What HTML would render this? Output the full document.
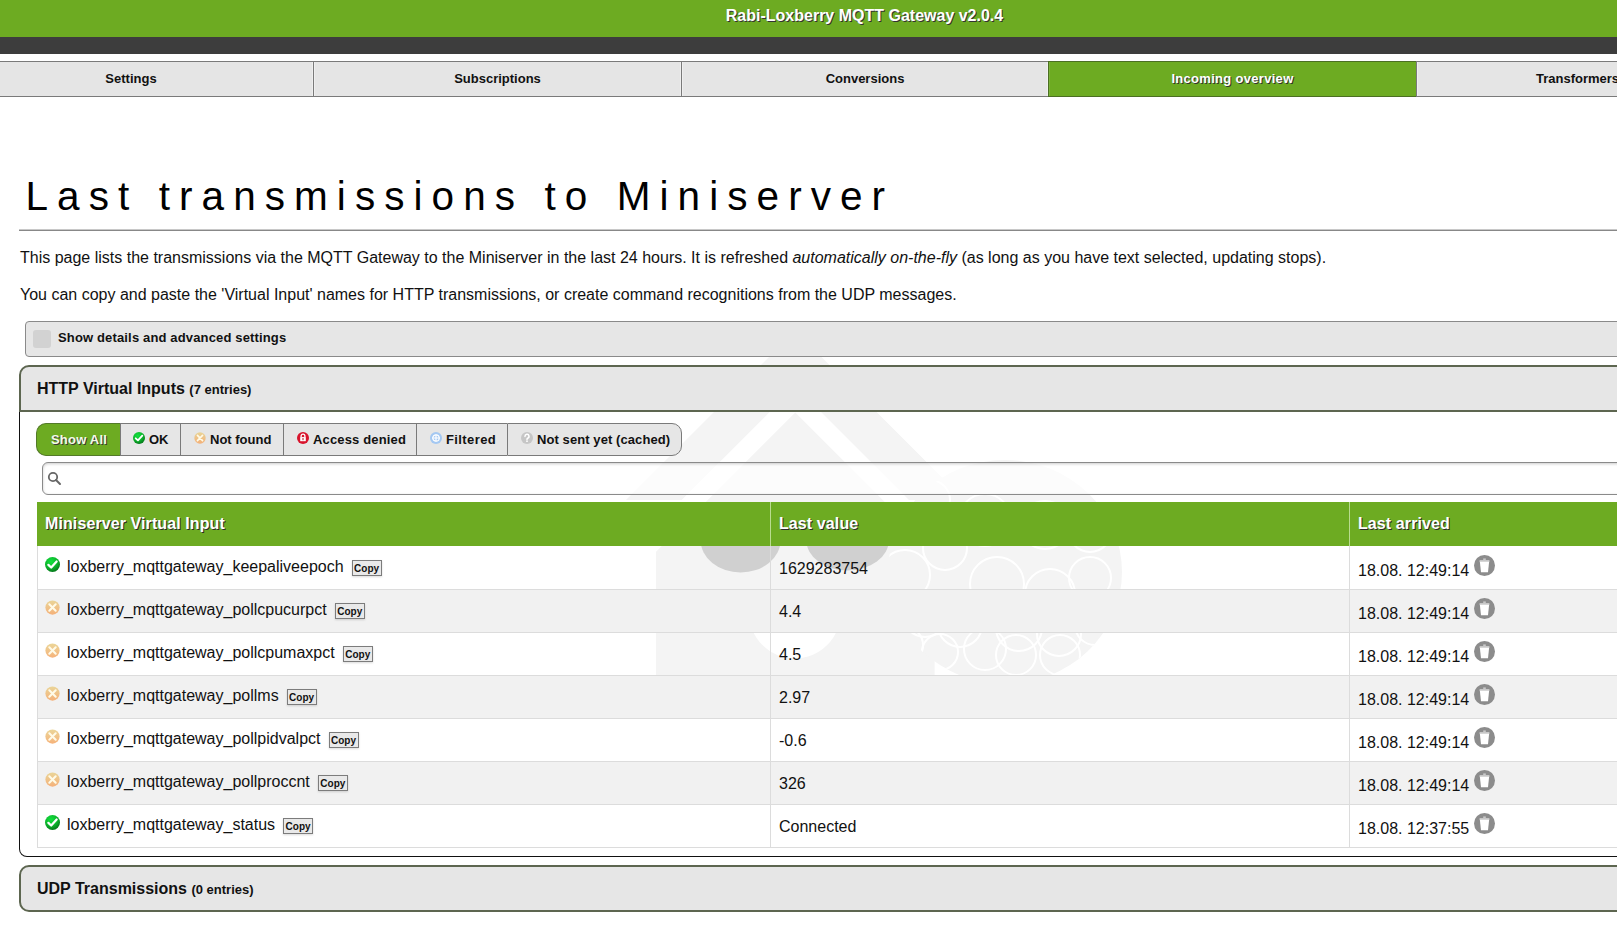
<!DOCTYPE html>
<html><head><meta charset="utf-8">
<style>
*{box-sizing:border-box;}
html,body{margin:0;padding:0;}
body{width:1617px;height:932px;overflow:hidden;position:relative;background:#fff;font-family:"Liberation Sans",sans-serif;color:#000;}
.abs{position:absolute;}
.tx{position:absolute;line-height:1;white-space:nowrap;}
#hdr{left:0;top:0;width:1617px;height:37px;background:#6dab22;}
#hdr .t{position:absolute;left:0;width:1729px;top:8px;text-align:center;font-size:16px;font-weight:bold;color:#fff;text-shadow:1px 1px 0 #333;line-height:1;}
#bar{left:0;top:37px;width:1617px;height:17px;background:#3d3d3d;}
#nav{left:0;top:61px;width:1617px;height:36px;border-top:1px solid #7a7a7a;border-bottom:1px solid #7a7a7a;background:#e5e5e5;}
#nav .it{position:absolute;top:0;height:34px;text-align:center;border-left:1px solid #7a7a7a;}
#nav .it span{position:absolute;left:0;right:0;top:10px;font-size:13px;font-weight:bold;color:#111;line-height:1;}
#nav .it{box-shadow:inset 1px 0 0 #efefef, inset -1px 0 0 #efefef;}
#nav .act{background:#6dab22;top:-1px;height:36px;border-top:1px solid #4b6f22;border-bottom:1px solid #4b6f22;border-left-color:#4b6f22;box-shadow:inset 1px 0 0 #7cb23a;}
#nav .act span{top:10px;}
#nav .act span{color:#fff;text-shadow:1px 1px 0 #333;}
h1{position:absolute;left:25.5px;top:175.7px;margin:0;font-size:40.5px;font-weight:normal;letter-spacing:9.07px;line-height:1;white-space:nowrap;color:#000;}
#hr{left:19px;top:229px;width:1600px;height:2px;border-top:1px solid #c8c8c8;background:#888;}
.p{position:absolute;left:20px;font-size:16px;line-height:20px;white-space:nowrap;color:#111;}
/* watermark */
#wm{left:640px;top:340px;}
/* show details */
#sd{left:25px;top:321px;width:1620px;height:36px;border:1px solid #8a8a8a;border-radius:4px;background:#e6e6e6;}
#sdcb{left:33px;top:330px;width:18px;height:18px;border-radius:3px;background:#d2d2d2;}
/* collapsibles */
.ch{left:19px;width:1630px;border:2px solid #5d6650;border-radius:10px 0 0 0;background:#e6e6e6;}
#vic{left:19px;top:410px;width:1630px;height:447px;border:1px solid #111;border-top:none;border-radius:0 0 0 8px;background:transparent;}
#udp-h{top:865px;height:47px;border-radius:10px 0 0 10px;}
/* filter group */
#fg{left:36px;top:423px;height:33px;}
.fb{position:absolute;top:0;height:33px;background:#e6e6e6;border-top:1px solid #7a7a7a;border-bottom:1px solid #7a7a7a;border-left:1px solid #7a7a7a;}
.fb span{position:absolute;top:9px;font-size:13px;font-weight:bold;color:#111;line-height:1;white-space:nowrap;}
/* search */
#srch{left:42px;top:462px;width:1600px;height:33px;border:1px solid #8a8a8a;border-radius:6px;background:rgba(255,255,255,0.7);box-shadow:inset 0 1px 3px rgba(0,0,0,0.2);}
/* table */
#th{left:37px;top:502px;width:1600px;height:44px;background:#6dab22;}
.thc{position:absolute;font-size:16px;font-weight:bold;color:#fff;text-shadow:1px 1px 0 #2a2a2a;letter-spacing:0.1px;line-height:1;white-space:nowrap;}
.row{left:37px;width:1600px;height:44px;border-bottom:1px solid #dcdcdc;}
.td{font-size:16px;line-height:1;white-space:nowrap;color:#111;}
.copy{width:30px;height:16px;border:1px solid #7c7c7c;background:#e9e9e9;font-size:10px;font-weight:bold;line-height:15px;text-align:center;color:#111;box-shadow:0 1px 2px rgba(0,0,0,0.15);}
.vl{top:502px;width:1px;height:345px;}
</style></head><body>
<svg class="abs" style="left:0;top:0" width="1617" height="932" viewBox="0 0 1617 932">
<defs><clipPath id="rb"><ellipse cx="1005" cy="572" rx="117" ry="112"/></clipPath><clipPath id="eyes"><rect x="0" y="546" width="1617" height="400"/></clipPath></defs>
<g fill="#f4f4f4">
<polygon points="626,500 795.3,330.7 964.6,500 909,500 795.3,386.3 681.7,500"/>
<polygon points="795.3,412.5 934.6,551.8 934.6,700 656,700 656,551.8"/>
<ellipse cx="1005" cy="572" rx="117" ry="112"/>
</g>
<g fill="none" stroke="#fff" stroke-width="2" clip-path="url(#rb)"><circle cx="905" cy="575" r="25"/><circle cx="945" cy="548" r="22"/><circle cx="997" cy="584" r="27"/><circle cx="1050" cy="594" r="25"/><circle cx="1090" cy="578" r="21"/><circle cx="925" cy="615" r="22"/><circle cx="960" cy="625" r="22"/><circle cx="1019" cy="628" r="23"/><circle cx="1059" cy="634" r="22"/><circle cx="1095" cy="625" r="20"/><circle cx="940" cy="652" r="18"/><circle cx="985" cy="649" r="21"/><circle cx="1016" cy="655" r="20"/><circle cx="1060" cy="655" r="20"/><circle cx="905" cy="645" r="18"/><circle cx="985" cy="520" r="26"/><circle cx="1045" cy="525" r="24"/><circle cx="930" cy="500" r="20"/><circle cx="1090" cy="530" r="22"/></g>
<path d="M749,612.7 A45.8,45.8 0 0 0 840.6,612.7 Z" fill="#fff"/>
<g clip-path="url(#eyes)">
<ellipse cx="740.6" cy="540" rx="40" ry="32.6" fill="#d0d0d0"/>
<ellipse cx="847.6" cy="540" rx="41.3" ry="30.5" fill="#d0d0d0"/>
</g>
</svg>
<div id="hdr" class="abs"><div class="t">Rabi-Loxberry MQTT Gateway v2.0.4</div></div>
<div id="bar" class="abs"></div>
<div id="nav" class="abs">
 <div class="it" style="left:-51px;width:364px;border-left:none"><span>Settings</span></div>
 <div class="it" style="left:313px;width:368px"><span>Subscriptions</span></div>
 <div class="it" style="left:681px;width:367px"><span>Conversions</span></div>
 <div class="it act" style="left:1048px;width:368px"><span style="letter-spacing:0.3px">Incoming overview</span></div>
 <div class="it" style="left:1416px;width:368px"><span style="left:119px;right:auto">Transformers</span></div>
</div>
<h1>Last transmissions to Miniserver</h1>
<div id="hr" class="abs"></div>
<div class="p" style="top:248px">This page lists the transmissions via the MQTT Gateway to the Miniserver in the last 24 hours. It is refreshed <i>automatically on-the-fly</i> (as long as you have text selected, updating stops).</div>
<div class="p" style="top:285px">You can copy and paste the 'Virtual Input' names for HTTP transmissions, or create command recognitions from the UDP messages.</div>

<div id="sd" class="abs"></div>
<div id="sdcb" class="abs"></div>
<div class="tx" style="left:58px;top:331px;font-size:13px;font-weight:bold;color:#111;letter-spacing:0.15px">Show details and advanced settings</div>

<div id="vic" class="abs"></div>
<div id="vih" class="abs ch" style="top:365px;height:47px"></div>
<div class="tx" style="left:37px;top:381px;font-size:16px;font-weight:bold;color:#111">HTTP Virtual Inputs <span style="font-size:13px">(7 entries)</span></div>

<div id="fg" class="abs">
 <div class="fb" style="left:0;width:84px;background:#6dab22;border-color:#537a28;border-radius:10px 0 0 10px"><span style="left:14px;color:#f4fbe8;text-shadow:1px 1px 0 #3a3a3a;letter-spacing:0.2px">Show All</span></div>
 <div class="fb" style="left:84px;width:60px"><span style="left:28px">OK</span></div>
 <div class="fb" style="left:144px;width:103px"><span style="left:29px">Not found</span></div>
 <div class="fb" style="left:247px;width:133px"><span style="left:29px;letter-spacing:0.15px">Access denied</span></div>
 <div class="fb" style="left:380px;width:91px"><span style="left:29px;letter-spacing:0.4px">Filtered</span></div>
 <div class="fb" style="left:471px;width:175px;border-right:1px solid #7a7a7a;border-radius:0 10px 10px 0"><span style="left:29px;letter-spacing:0.08px">Not sent yet (cached)</span></div>
</div>


<svg class="abs" style="left:133px;top:432px" width="12" height="12" viewBox="0 0 16 16"><defs><radialGradient id="gokf" cx="40%" cy="30%" r="70%"><stop offset="0" stop-color="#12e23e"/><stop offset="0.6" stop-color="#0cb52c"/><stop offset="1" stop-color="#067a1c"/></radialGradient></defs><circle cx="8" cy="8" r="8" fill="url(#gokf)"/><path d="M3.6 8.4 L6.6 11.2 L12.4 4.8" fill="none" stroke="#fff" stroke-width="2.4" stroke-linecap="round" stroke-linejoin="round"/></svg>
<svg class="abs" style="left:194px;top:432px" width="12" height="12" viewBox="0 0 16 16"><defs><linearGradient id="gnff" x1="0" y1="0" x2="0" y2="1"><stop offset="0" stop-color="#e9d28e"/><stop offset="1" stop-color="#f5aa6c"/></linearGradient></defs><circle cx="8" cy="8" r="7.6" fill="url(#gnff)" opacity="0.9"/><path d="M4.6 4.6 L11.4 11.4 M11.4 4.6 L4.6 11.4" fill="none" stroke="#fffbe8" stroke-width="2.2" stroke-linecap="round"/></svg>
<svg class="abs" style="left:297px;top:432px" width="12" height="12" viewBox="0 0 12 12"><circle cx="6" cy="6" r="6" fill="#d8142c"/><path d="M4.1 5.2 V4.1 A1.9 1.9 0 0 1 7.9 4.1 V5.2" fill="none" stroke="#fff" stroke-width="1.3"/><rect x="3.2" y="5.1" width="5.6" height="4.1" fill="#fff"/><rect x="5.5" y="6" width="1" height="2.2" fill="#b01020"/></svg>
<svg class="abs" style="left:430px;top:432px" width="12" height="12" viewBox="0 0 12 12"><circle cx="6" cy="6" r="6" fill="#a4c8f2"/><circle cx="6" cy="6" r="3.2" fill="none" stroke="#fff" stroke-width="1.2"/><path d="M2 6 H10 M6 2.6 V9.4" stroke="#fff" stroke-width="1.2"/></svg>
<svg class="abs" style="left:521px;top:432px" width="12" height="12" viewBox="0 0 12 12"><circle cx="6" cy="6" r="6" fill="#c6c6c6"/><path d="M4 4.4 A2 2 0 1 1 6.6 6.2 Q6 6.5 6 7.4" fill="none" stroke="#fff" stroke-width="1.5" stroke-linecap="round"/><circle cx="6" cy="9.2" r="0.9" fill="#fff"/></svg>
<div id="srch" class="abs"></div>
<svg class="abs" style="left:47px;top:471px" width="15" height="15" viewBox="0 0 15 15"><circle cx="6" cy="6" r="4.2" fill="none" stroke="#666" stroke-width="1.8"/><path d="M9 9 L13 13" stroke="#666" stroke-width="2" stroke-linecap="round"/></svg>

<div id="th" class="abs"></div>
<div class="thc" style="left:45px;top:516px">Miniserver Virtual Input</div>
<div class="thc" style="left:779px;top:516px">Last value</div>
<div class="thc" style="left:1358px;top:516px">Last arrived</div>
<div class="row abs" style="top:546px;height:44px;background:transparent"></div>
<svg class="abs" style="left:45px;top:557px" width="15" height="15" viewBox="0 0 16 16"><defs><radialGradient id="gok45557" cx="40%" cy="30%" r="70%"><stop offset="0" stop-color="#12e23e"/><stop offset="0.6" stop-color="#0cb52c"/><stop offset="1" stop-color="#067a1c"/></radialGradient></defs><circle cx="8" cy="8" r="8" fill="url(#gok45557)"/><path d="M3.6 8.4 L6.6 11.2 L12.4 4.8" fill="none" stroke="#fff" stroke-width="2.4" stroke-linecap="round" stroke-linejoin="round"/></svg>
<div class="td abs" style="left:67px;top:559px">loxberry_mqttgateway_keepaliveepoch</div>
<div class="copy abs" style="left:351.6px;top:560px">Copy</div>
<div class="td abs" style="left:779px;top:561px">1629283754</div>
<div class="td abs" style="left:1358px;top:563px">18.08. 12:49:14</div>
<svg class="abs" style="left:1474px;top:555px" width="21" height="21" viewBox="0 0 21 21"><circle cx="10.5" cy="10.5" r="10.5" fill="#8c8c8c"/><path d="M5.6 5.2 H15.4 V7 H5.6 Z" fill="#d6d6d6"/><path d="M9.2 3.4 H11.8 V5.2 H9.2Z" fill="#c8c8c8"/><path d="M5.9 7 H15.1 L14 17.2 H7 Z" fill="#fff"/></svg>
<div class="row abs" style="top:590px;height:43px;background:#f1f1f1"></div>
<svg class="abs" style="left:45px;top:600px" width="15" height="15" viewBox="0 0 16 16"><defs><linearGradient id="gnf45600" x1="0" y1="0" x2="0" y2="1"><stop offset="0" stop-color="#e9d28e"/><stop offset="1" stop-color="#f5aa6c"/></linearGradient></defs><circle cx="8" cy="8" r="7.6" fill="url(#gnf45600)" opacity="0.9"/><path d="M4.6 4.6 L11.4 11.4 M11.4 4.6 L4.6 11.4" fill="none" stroke="#fffbe8" stroke-width="2.2" stroke-linecap="round"/></svg>
<div class="td abs" style="left:67px;top:602px">loxberry_mqttgateway_pollcpucurpct</div>
<div class="copy abs" style="left:334.7px;top:603px">Copy</div>
<div class="td abs" style="left:779px;top:604px">4.4</div>
<div class="td abs" style="left:1358px;top:606px">18.08. 12:49:14</div>
<svg class="abs" style="left:1474px;top:598px" width="21" height="21" viewBox="0 0 21 21"><circle cx="10.5" cy="10.5" r="10.5" fill="#8c8c8c"/><path d="M5.6 5.2 H15.4 V7 H5.6 Z" fill="#d6d6d6"/><path d="M9.2 3.4 H11.8 V5.2 H9.2Z" fill="#c8c8c8"/><path d="M5.9 7 H15.1 L14 17.2 H7 Z" fill="#fff"/></svg>
<div class="row abs" style="top:633px;height:43px;background:transparent"></div>
<svg class="abs" style="left:45px;top:643px" width="15" height="15" viewBox="0 0 16 16"><defs><linearGradient id="gnf45643" x1="0" y1="0" x2="0" y2="1"><stop offset="0" stop-color="#e9d28e"/><stop offset="1" stop-color="#f5aa6c"/></linearGradient></defs><circle cx="8" cy="8" r="7.6" fill="url(#gnf45643)" opacity="0.9"/><path d="M4.6 4.6 L11.4 11.4 M11.4 4.6 L4.6 11.4" fill="none" stroke="#fffbe8" stroke-width="2.2" stroke-linecap="round"/></svg>
<div class="td abs" style="left:67px;top:645px">loxberry_mqttgateway_pollcpumaxpct</div>
<div class="copy abs" style="left:342.7px;top:646px">Copy</div>
<div class="td abs" style="left:779px;top:647px">4.5</div>
<div class="td abs" style="left:1358px;top:649px">18.08. 12:49:14</div>
<svg class="abs" style="left:1474px;top:641px" width="21" height="21" viewBox="0 0 21 21"><circle cx="10.5" cy="10.5" r="10.5" fill="#8c8c8c"/><path d="M5.6 5.2 H15.4 V7 H5.6 Z" fill="#d6d6d6"/><path d="M9.2 3.4 H11.8 V5.2 H9.2Z" fill="#c8c8c8"/><path d="M5.9 7 H15.1 L14 17.2 H7 Z" fill="#fff"/></svg>
<div class="row abs" style="top:676px;height:43px;background:#f1f1f1"></div>
<svg class="abs" style="left:45px;top:686px" width="15" height="15" viewBox="0 0 16 16"><defs><linearGradient id="gnf45686" x1="0" y1="0" x2="0" y2="1"><stop offset="0" stop-color="#e9d28e"/><stop offset="1" stop-color="#f5aa6c"/></linearGradient></defs><circle cx="8" cy="8" r="7.6" fill="url(#gnf45686)" opacity="0.9"/><path d="M4.6 4.6 L11.4 11.4 M11.4 4.6 L4.6 11.4" fill="none" stroke="#fffbe8" stroke-width="2.2" stroke-linecap="round"/></svg>
<div class="td abs" style="left:67px;top:688px">loxberry_mqttgateway_pollms</div>
<div class="copy abs" style="left:286.6px;top:689px">Copy</div>
<div class="td abs" style="left:779px;top:690px">2.97</div>
<div class="td abs" style="left:1358px;top:692px">18.08. 12:49:14</div>
<svg class="abs" style="left:1474px;top:684px" width="21" height="21" viewBox="0 0 21 21"><circle cx="10.5" cy="10.5" r="10.5" fill="#8c8c8c"/><path d="M5.6 5.2 H15.4 V7 H5.6 Z" fill="#d6d6d6"/><path d="M9.2 3.4 H11.8 V5.2 H9.2Z" fill="#c8c8c8"/><path d="M5.9 7 H15.1 L14 17.2 H7 Z" fill="#fff"/></svg>
<div class="row abs" style="top:719px;height:43px;background:transparent"></div>
<svg class="abs" style="left:45px;top:729px" width="15" height="15" viewBox="0 0 16 16"><defs><linearGradient id="gnf45729" x1="0" y1="0" x2="0" y2="1"><stop offset="0" stop-color="#e9d28e"/><stop offset="1" stop-color="#f5aa6c"/></linearGradient></defs><circle cx="8" cy="8" r="7.6" fill="url(#gnf45729)" opacity="0.9"/><path d="M4.6 4.6 L11.4 11.4 M11.4 4.6 L4.6 11.4" fill="none" stroke="#fffbe8" stroke-width="2.2" stroke-linecap="round"/></svg>
<div class="td abs" style="left:67px;top:731px">loxberry_mqttgateway_pollpidvalpct</div>
<div class="copy abs" style="left:328.5px;top:732px">Copy</div>
<div class="td abs" style="left:779px;top:733px">-0.6</div>
<div class="td abs" style="left:1358px;top:735px">18.08. 12:49:14</div>
<svg class="abs" style="left:1474px;top:727px" width="21" height="21" viewBox="0 0 21 21"><circle cx="10.5" cy="10.5" r="10.5" fill="#8c8c8c"/><path d="M5.6 5.2 H15.4 V7 H5.6 Z" fill="#d6d6d6"/><path d="M9.2 3.4 H11.8 V5.2 H9.2Z" fill="#c8c8c8"/><path d="M5.9 7 H15.1 L14 17.2 H7 Z" fill="#fff"/></svg>
<div class="row abs" style="top:762px;height:43px;background:#f1f1f1"></div>
<svg class="abs" style="left:45px;top:772px" width="15" height="15" viewBox="0 0 16 16"><defs><linearGradient id="gnf45772" x1="0" y1="0" x2="0" y2="1"><stop offset="0" stop-color="#e9d28e"/><stop offset="1" stop-color="#f5aa6c"/></linearGradient></defs><circle cx="8" cy="8" r="7.6" fill="url(#gnf45772)" opacity="0.9"/><path d="M4.6 4.6 L11.4 11.4 M11.4 4.6 L4.6 11.4" fill="none" stroke="#fffbe8" stroke-width="2.2" stroke-linecap="round"/></svg>
<div class="td abs" style="left:67px;top:774px">loxberry_mqttgateway_pollproccnt</div>
<div class="copy abs" style="left:317.8px;top:775px">Copy</div>
<div class="td abs" style="left:779px;top:776px">326</div>
<div class="td abs" style="left:1358px;top:778px">18.08. 12:49:14</div>
<svg class="abs" style="left:1474px;top:770px" width="21" height="21" viewBox="0 0 21 21"><circle cx="10.5" cy="10.5" r="10.5" fill="#8c8c8c"/><path d="M5.6 5.2 H15.4 V7 H5.6 Z" fill="#d6d6d6"/><path d="M9.2 3.4 H11.8 V5.2 H9.2Z" fill="#c8c8c8"/><path d="M5.9 7 H15.1 L14 17.2 H7 Z" fill="#fff"/></svg>
<div class="row abs" style="top:805px;height:43px;background:transparent"></div>
<svg class="abs" style="left:45px;top:815px" width="15" height="15" viewBox="0 0 16 16"><defs><radialGradient id="gok45815" cx="40%" cy="30%" r="70%"><stop offset="0" stop-color="#12e23e"/><stop offset="0.6" stop-color="#0cb52c"/><stop offset="1" stop-color="#067a1c"/></radialGradient></defs><circle cx="8" cy="8" r="8" fill="url(#gok45815)"/><path d="M3.6 8.4 L6.6 11.2 L12.4 4.8" fill="none" stroke="#fff" stroke-width="2.4" stroke-linecap="round" stroke-linejoin="round"/></svg>
<div class="td abs" style="left:67px;top:817px">loxberry_mqttgateway_status</div>
<div class="copy abs" style="left:283.1px;top:818px">Copy</div>
<div class="td abs" style="left:779px;top:819px">Connected</div>
<div class="td abs" style="left:1358px;top:821px">18.08. 12:37:55</div>
<svg class="abs" style="left:1474px;top:813px" width="21" height="21" viewBox="0 0 21 21"><circle cx="10.5" cy="10.5" r="10.5" fill="#8c8c8c"/><path d="M5.6 5.2 H15.4 V7 H5.6 Z" fill="#d6d6d6"/><path d="M9.2 3.4 H11.8 V5.2 H9.2Z" fill="#c8c8c8"/><path d="M5.9 7 H15.1 L14 17.2 H7 Z" fill="#fff"/></svg>
<div class="vl abs" style="left:770px;top:502px;height:44px;background:#b9dc8f"></div>
<div class="vl abs" style="left:1349px;top:502px;height:44px;background:#b9dc8f"></div>
<div class="vl abs" style="left:770px;top:546px;height:301px;background:#dcdcdc"></div>
<div class="vl abs" style="left:1349px;top:546px;height:301px;background:#dcdcdc"></div>
<div class="vl abs" style="left:37px;top:546px;height:301px;background:#dcdcdc"></div>

<div id="udp-h" class="abs ch"></div>
<div class="tx" style="left:37px;top:881px;font-size:16px;font-weight:bold;color:#111">UDP Transmissions <span style="font-size:13px">(0 entries)</span></div>
</body></html>
